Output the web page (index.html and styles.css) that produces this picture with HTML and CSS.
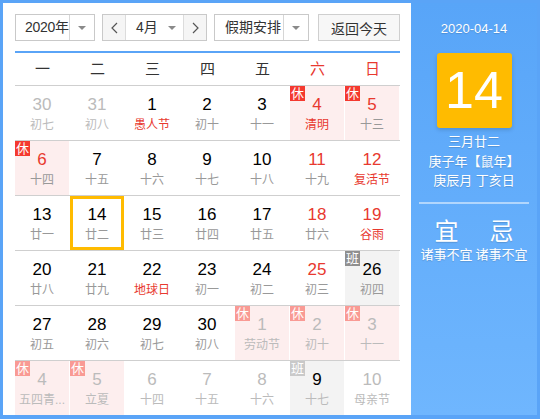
FILE: index.html
```html
<!DOCTYPE html>
<html lang="zh">
<head>
    <meta charset="UTF-8">
    <title>万年历</title>
    <link rel="stylesheet" href="styles.css">
</head>
<body>
    <div class="calendar">
        <div class="main">
            <div class="toolbar">
                <div class="select year-select">
                    <span class="select-text">2020年</span>
                    <span class="select-arrow"><i class="caret"></i></span>
                </div>
                <div class="month-group">
                    <span class="nav-btn">
                        <svg width="7" height="12" viewBox="0 0 7 12"><path d="M6 1 L1 6 L6 11" fill="none" stroke="#555" stroke-width="1.2"/></svg>
                    </span>
                    <span class="month-text">4月</span>
                    <span class="month-arrow"><i class="caret"></i></span>
                    <span class="nav-btn">
                        <svg width="7" height="12" viewBox="0 0 7 12"><path d="M1 1 L6 6 L1 11" fill="none" stroke="#555" stroke-width="1.2"/></svg>
                    </span>
                </div>
                <div class="select holiday-select">
                    <span class="select-text">假期安排</span>
                    <span class="select-arrow"><i class="caret"></i></span>
                </div>
                <button class="today-btn">返回今天</button>
            </div>

            <div class="weekdays">
                <span>一</span><span>二</span><span>三</span><span>四</span><span>五</span>
                <span class="red">六</span><span class="red">日</span>
            </div>

            <div class="days" id="days"></div>
        </div>

        <div class="side">
            <div class="side-date">2020-04-14</div>
            <div class="big-day">14</div>
            <div class="lunar-info">
                <p>三月廿二</p>
                <p>庚子年【鼠年】</p>
                <p>庚辰月 丁亥日</p>
            </div>
            <div class="divider"></div>
            <div class="yiji">
                <div class="yiji-col">
                    <div class="yiji-title">宜</div>
                    <div class="yiji-text">诸事不宜</div>
                </div>
                <div class="yiji-col">
                    <div class="yiji-title">忌</div>
                    <div class="yiji-text">诸事不宜</div>
                </div>
            </div>
        </div>
    </div>

    <script>
        // [日期, 农历/节日, 标记]  o=非本月 r=红色数字 f=红色节日 x=休 b=班 s=选中
        const cells = [
            ['30', '初七', 'o'], ['31', '初八', 'o'], ['1', '愚人节', 'f'], ['2', '初十', ''], ['3', '十一', ''], ['4', '清明', 'x r f'], ['5', '十三', 'x r'],
            ['6', '十四', 'x r'], ['7', '十五', ''], ['8', '十六', ''], ['9', '十七', ''], ['10', '十八', ''], ['11', '十九', 'r'], ['12', '复活节', 'r f'],
            ['13', '廿一', ''], ['14', '廿二', 's'], ['15', '廿三', ''], ['16', '廿四', ''], ['17', '廿五', ''], ['18', '廿六', 'r'], ['19', '谷雨', 'r f'],
            ['20', '廿八', ''], ['21', '廿九', ''], ['22', '地球日', 'f'], ['23', '初一', ''], ['24', '初二', ''], ['25', '初三', 'r'], ['26', '初四', 'b'],
            ['27', '初五', ''], ['28', '初六', ''], ['29', '初七', ''], ['30', '初八', ''], ['1', '劳动节', 'o x'], ['2', '初十', 'o x'], ['3', '十一', 'o x'],
            ['4', '五四青...', 'o x'], ['5', '立夏', 'o x'], ['6', '十四', 'o'], ['7', '十五', 'o'], ['8', '十六', 'o'], ['9', '十七', 'o b'], ['10', '母亲节', 'o']
        ];

        const days = document.getElementById('days');
        for (let i = 0; i < cells.length; i += 7) {
            const row = document.createElement('div');
            row.className = 'week';
            cells.slice(i, i + 7).forEach(([num, lunar, flags]) => {
                const f = flags.split(' ');
                const cell = document.createElement('div');
                cell.className = 'day';
                if (f.includes('o')) cell.classList.add('other');
                if (f.includes('r')) cell.classList.add('weekend');
                if (f.includes('f')) cell.classList.add('fest');
                if (f.includes('x')) cell.classList.add('rest');
                if (f.includes('b')) cell.classList.add('work');
                if (f.includes('s')) cell.classList.add('selected');

                let badge = '';
                if (f.includes('x')) badge = '<span class="badge">休</span>';
                if (f.includes('b')) badge = '<span class="badge">班</span>';

                cell.innerHTML = badge +
                    '<span class="num">' + num + '</span>' +
                    '<span class="lunar">' + lunar + '</span>';
                row.appendChild(cell);
            });
            days.appendChild(row);
        }
    </script>
</body>
</html>
```

FILE: styles.css
```css
* {
    margin: 0;
    padding: 0;
    box-sizing: border-box;
}

body {
    font-family: "Liberation Sans", "Noto Sans CJK SC", sans-serif;
    background: #fff;
    color: #333;
}

.calendar {
    display: flex;
    width: 540px;
    height: 419px;
    border: 3px solid #5aa4f7;
    border-bottom-width: 4px;
    background: #fff;
}

.main {
    width: 408px;
    padding: 11px 11px 0 12px;
}

/* 顶部工具栏 */
.toolbar {
    display: flex;
    height: 27px;
    font-size: 14px;
    color: #333;
}

.select {
    display: flex;
    border: 1px solid #c9c9c9;
    background: #fff;
}

.select-text {
    flex: 1;
    line-height: 25px;
    padding-left: 10px;
    white-space: nowrap;
}

.select-arrow {
    width: 25px;
    border-left: 1px solid #d6d6d6;
    display: flex;
    align-items: center;
    justify-content: center;
}

.caret {
    width: 0;
    height: 0;
    border-left: 4px solid transparent;
    border-right: 4px solid transparent;
    border-top: 4px solid #8a8a8a;
}

.year-select {
    width: 80px;
}

.year-select .select-text {
    padding-left: 9px;
    letter-spacing: -0.3px;
}

.month-group {
    display: flex;
    width: 105px;
    margin-left: 7px;
    border: 1px solid #c9c9c9;
}

.nav-btn {
    width: 23px;
    background: #f5f5f5;
    display: flex;
    align-items: center;
    justify-content: center;
}

.nav-btn:first-child {
    border-right: 1px solid #dcdcdc;
}

.nav-btn:last-child {
    border-left: 1px solid #dcdcdc;
}

.month-text {
    flex: 1;
    line-height: 25px;
    padding-left: 10px;
}

.month-arrow {
    width: 22px;
    display: flex;
    align-items: center;
    justify-content: center;
}

.holiday-select {
    width: 95px;
    margin-left: 7px;
}

.today-btn {
    width: 82px;
    margin-left: 9px;
    border: 1px solid #cfcfcf;
    background: #f7f7f7;
    font-family: inherit;
    font-size: 14px;
    color: #333;
}

/* 星期 */
.weekdays {
    display: grid;
    grid-template-columns: repeat(7, 55px);
    width: 385px;
    margin-top: 10px;
    border-top: 2px solid #5aa4f7;
    border-bottom: 1px solid #cfcfcf;
    height: 35px;
    line-height: 32px;
    text-align: center;
    font-size: 15px;
    color: #333;
}

.weekdays .red {
    color: #e8392f;
}

/* 日期格子 */
.week {
    display: grid;
    grid-template-columns: repeat(7, 54px);
    column-gap: 1px;
    width: 385px;
    border-bottom: 1px solid #cfcfcf;
}

.week:last-child {
    border-bottom: none;
}

.day {
    position: relative;
    height: 54px;
    display: flex;
    flex-direction: column;
    align-items: center;
    padding-top: 9px;
}

.num {
    font-size: 17px;
    line-height: 20px;
    color: #000;
}

.lunar {
    font-size: 12px;
    line-height: 16px;
    margin-top: 2px;
    color: #999;
    white-space: nowrap;
}

.day.weekend .num {
    color: #e8392f;
}

.day.fest .lunar {
    color: #e8392f;
}

.day.other .num,
.day.other .lunar {
    color: #bbb;
}

.day.rest {
    background: #fdeeee;
}

.day.work {
    background: #f3f3f3;
}

.day.work .num {
    color: #000;
}

.badge {
    position: absolute;
    top: 0;
    left: 0;
    width: 15px;
    height: 15px;
    font-size: 13px;
    line-height: 15px;
    text-align: center;
    color: #fff;
    background: #f4392f;
}

.day.work .badge {
    background: #8f8f8f;
}

.day.other .badge {
    background: #f99a94;
}

.day.other.work .badge {
    background: #c9c9c9;
}

.day.selected {
    border: 3px solid #ffbb00;
    padding-top: 6px;
}

/* 右侧详情 */
.side {
    flex: 1;
    background: linear-gradient(to bottom, #58a5f8, #6fb6fe);
    color: #fff;
    text-align: center;
    text-shadow: 0 1px 1px rgba(0, 0, 0, 0.15);
}

.side-date {
    margin-top: 17px;
    font-size: 13px;
    line-height: 18px;
}

.big-day {
    width: 75px;
    height: 75px;
    margin: 15px auto 0;
    background: #ffbb00;
    border-radius: 3px;
    box-shadow: 0 2px 4px rgba(0, 0, 0, 0.15);
    font-size: 52px;
    line-height: 75px;
    text-shadow: none;
}

.lunar-info {
    margin-top: 4px;
    font-size: 13px;
    line-height: 19.5px;
}

.divider {
    width: 110px;
    height: 2px;
    margin: 11px auto 0;
    background: rgba(255, 255, 255, 0.5);
}

.yiji {
    display: flex;
    width: 110px;
    margin: 14px auto 0;
}

.yiji-col {
    width: 55px;
}

.yiji-title {
    font-size: 24px;
    line-height: 28px;
}

.yiji-text {
    font-size: 13px;
    line-height: 18px;
    white-space: nowrap;
    margin-left: -1px;
    margin-right: -1px;
}
```
